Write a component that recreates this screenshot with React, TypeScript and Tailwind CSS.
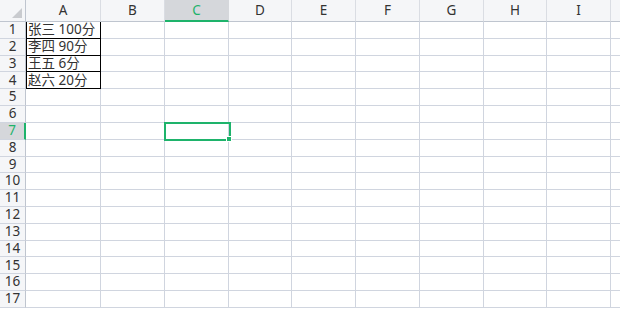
import React from "react";

const cols = [
  { k: "A", w: 75 },
  { k: "B", w: 64 },
  { k: "C", w: 64 },
  { k: "D", w: 63 },
  { k: "E", w: 64 },
  { k: "F", w: 64 },
  { k: "G", w: 64 },
  { k: "H", w: 63 },
  { k: "I", w: 64 },
  { k: "", w: 40 },
];

const data: Record<number, string> = {
  1: "张三 100分",
  2: "李四 90分",
  3: "王五 6分",
  4: "赵六 20分",
};

const rows = Array.from({ length: 17 }, (_, i) => i + 1);

export default function App() {
  return (
    <div
      className="relative w-[620px] h-[309px] overflow-hidden bg-white text-[13.5px] text-[#333]"
      style={{ fontFamily: '"Noto Sans", "Noto Sans CJK SC", sans-serif' }}
    >
      {/* header row */}
      <div className="flex h-[22px]">
        <div className="relative w-[26px] shrink-0 bg-[#f5f6f8] border-r border-b border-[#bfc5cf]">
          <div className="absolute right-[3px] bottom-[3px] w-0 h-0 border-l-[10px] border-l-transparent border-b-[10px] border-b-[#c9cbcf]" />
        </div>
        {cols.map((c, i) => {
          const sel = c.k === "C";
          return (
            <div
              key={i}
              style={{ width: c.w }}
              className={
                "shrink-0 flex items-center justify-center border-r leading-none " +
                (sel
                  ? "bg-[#d5d7db] border-[#d5d7db] border-b-2 border-b-[#1eb36b] text-[#1eb36b]"
                  : "bg-[#f5f6f8] border-[#dadde3] border-b border-b-[#bfc5cf]")
              }
            >
              <span className="pt-[1px]">{c.k}</span>
            </div>
          );
        })}
      </div>
      {/* body rows */}
      {rows.map((r) => {
        const selRow = r === 7;
        return (
          <div key={r} className="flex h-[16.82px]">
            <div
              className={
                "w-[26px] shrink-0 flex items-center justify-center border-b border-[#d0d5df] leading-none " +
                (selRow
                  ? "bg-[#d5d7db] border-r-2 border-r-[#1eb36b] text-[#1eb36b]"
                  : "bg-[#f5f6f8] border-r border-r-[#bfc5cf]")
              }
            >
              {r}
            </div>
            {cols.map((c, i) => {
              const hasData = c.k === "A" && r <= 4;
              return (
                <div
                  key={i}
                  style={{ width: c.w }}
                  className={
                    "shrink-0 flex items-center px-[2px] whitespace-nowrap leading-none border-r border-b " +
                    (hasData
                      ? "border-black shadow-[inset_1px_0_0_#000]"
                      : "border-[#d0d5df]")
                  }
                >
                  {hasData ? data[r] : ""}
                </div>
              );
            })}
          </div>
        );
      })}
      {/* selection overlay */}
      <div className="absolute left-[164px] top-[122px] w-[67px] h-[19px] border-2 border-[#1eb36b] pointer-events-none">
        <div className="absolute -right-[3px] -bottom-[3px] w-[6px] h-[6px] bg-[#1eb36b] border border-white" />
      </div>
    </div>
  );
}
